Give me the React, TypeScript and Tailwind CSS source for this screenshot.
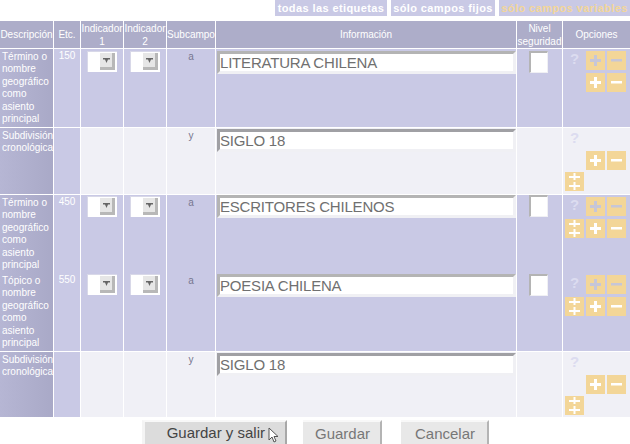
const FONT = "font-['Liberation_Sans',Arial,sans-serif]";

type Row = {
  desc: string;
  tag?: string;
  sub: string;
  value: string;
  height: string;
  inputTop: string;
  selectTop: string;
  light?: boolean;
  noRule?: boolean;
  opts: "first" | "full" | "lower";
};

const ROWS: Row[] = [
  { desc: "Término o nombre geográfico como asiento principal", tag: "150", sub: "a", value: "LITERATURA CHILENA", height: "h-[79px]", inputTop: "mt-[2px]", selectTop: "mt-[2px]", opts: "first" },
  { desc: "Subdivisión cronológica", sub: "y", value: "SIGLO 18", height: "h-[67px]", inputTop: "mt-[1px]", selectTop: "mt-[1px]", light: true, opts: "lower" },
  { desc: "Término o nombre geográfico como asiento principal", tag: "450", sub: "a", value: "ESCRITORES CHILENOS", height: "h-[78px]", inputTop: "mt-0", selectTop: "mt-[1px]", noRule: true, opts: "full" },
  { desc: "Tópico o nombre geográfico como asiento principal", tag: "550", sub: "a", value: "POESIA CHILENA", height: "h-[79px]", inputTop: "mt-[1px]", selectTop: "mt-[1px]", opts: "full" },
  { desc: "Subdivisión cronológica", sub: "y", value: "SIGLO 18", height: "h-[65px]", inputTop: "mt-[1px]", selectTop: "mt-[1px]", light: true, noRule: true, opts: "lower" },
];

function FakeSelect({ top }: { top: string }) {
  return (
    <div className={`mx-auto ${top} flex h-[21px] w-[30px] border-t border-l border-[#d8d8e8] bg-white pr-[2px] pb-[2px]`}>
      <div className="flex-1 bg-white" />
      <div className="flex h-[17px] w-[15px] items-center justify-center self-end border-r-[3px] border-b-[3px] border-[#b8b8b8] bg-[#e6e6e6]">
        <svg width="7" height="5" viewBox="0 0 7 5">
          <path d="M0 0h7v1.5H5L3.5 5 2 1.5H0z" fill="#666" />
        </svg>
      </div>
    </div>
  );
}

function OptionButton({ glyph, faded }: { glyph: "+" | "-" | "++"; faded?: boolean }) {
  const color = faded ? "#c6c6d8" : "#ffffff";
  return (
    <div className="flex h-[19px] w-[19px] items-center justify-center bg-[#f3d698]">
      <svg width="13" height="17" viewBox="0 0 13 17">
        {glyph === "+" && <path d="M5 3h3v4h4v3H8v4H5v-4H1V7h4z" fill={color} />}
        {glyph === "-" && <rect x="1" y="7" width="11" height="2.5" fill={color} />}
        {glyph === "++" && (
          <path d="M5.500 0h2v3h4.500v2H7.500v2h-2V5H1V3h4.500zM5.500 9h2v3h4.500v2H7.500v3h-2v-3H1v-2h4.500z" fill={color} />
        )}
      </svg>
    </div>
  );
}

function Help() {
  return (
    <div className="flex h-[19px] w-[19px] justify-center text-[15px] leading-[15px] font-bold text-[#dcdcf0]">
      ?
    </div>
  );
}

function Options({ kind }: { kind: Row["opts"] }) {
  if (kind === "lower") {
    return (
      <div className="grid grid-cols-[19px_19px_19px] gap-[2px] pt-[2px] pl-[2px]">
        <Help />
        <div className="col-span-2 h-[19px]" />
        <div />
        <OptionButton glyph="+" />
        <OptionButton glyph="-" />
        <OptionButton glyph="++" />
      </div>
    );
  }
  return (
    <div className="grid grid-cols-[19px_19px_19px] gap-x-[2px] gap-y-[3px] pt-[2px] pl-[2px]">
      <Help />
      <OptionButton glyph="+" faded />
      <OptionButton glyph="-" faded />
      {kind === "full" ? <OptionButton glyph="++" /> : <div />}
      <OptionButton glyph="+" />
      <OptionButton glyph="-" />
    </div>
  );
}

function RowCells({ row }: { row: Row }) {
  const rule = row.noRule ? "" : "border-b";
  const bg = row.light ? "bg-[#f0f0f6]" : "bg-[#c9c9e5]";
  const cell = `border-r border-white align-top ${rule} ${bg}`;
  const inset = row.light ? "border-t-[#a0a0a4] border-l-[#a0a0a4]" : "border-t-[#b4b4b4] border-l-[#b4b4b4]";
  return (
    <tr className={row.height}>
      <td className={`border-r border-white bg-gradient-to-r from-[#b6b6d4] to-[#a9a9c7] pt-[2px] pl-[2px] align-top text-[10px] leading-[12.4px] text-white ${rule}`}>
        {row.desc}
      </td>
      <td className={`border-r border-white bg-[#c9c9e5] pt-[1px] text-center align-top text-[10px] leading-[12px] text-white ${rule}`}>
        {row.tag}
      </td>
      <td className={cell}>{row.tag && <FakeSelect top={row.selectTop} />}</td>
      <td className={cell}>{row.tag && <FakeSelect top={row.selectTop} />}</td>
      <td className={`${cell} pt-[2px] text-center text-[10px] leading-[12px] text-[#77778f]`}>{row.sub}</td>
      <td className={cell}>
        <div className={`${row.inputTop} ml-[1px] flex h-[23px] items-center border-t-[3px] border-r-[3px] border-b-[3px] border-l-[3px] border-r-[#f0f0f4] border-b-[#f0f0f4] ${inset} bg-white pb-[1px] text-[15px] leading-none tracking-[-0.2px] text-[#707070]`}>
          {row.value}
        </div>
      </td>
      <td className={cell}>
        {row.tag && (
          <div className={`${row.inputTop} ml-[12px] h-[22px] w-[19px] border-t-[2px] border-r border-b border-l-[2px] border-t-[#b4b4b4] border-r-[#f0f0f4] border-b-[#f0f0f4] border-l-[#b4b4b4] bg-white`} />
        )}
      </td>
      <td className={`${bg} align-top ${rule} border-white`}>
        <Options kind={row.opts} />
      </td>
    </tr>
  );
}

function ActionButton({ label, width }: { label: string; width: string }) {
  return (
    <button
      type="button"
      className={`h-[24px] ${width} border-t-2 border-r-2 border-t-[#f8f8f8] border-r-[#b4b4b4] bg-[#e8e8e8] pt-[1px] pl-[2px] text-[15px] leading-[20px] text-[#777]`}
    >
      {label}
    </button>
  );
}

export default function App() {
  return (
    <div className={`flex h-[444px] w-[630px] flex-col overflow-hidden bg-white ${FONT}`}>
      <div className="flex h-[16px] justify-end gap-[4px] text-[11px] leading-[16px] font-bold tracking-[0.4px]">
        <span className="w-[112px] bg-[#c9c9e5] text-center text-white">todas las etiquetas</span>
        <span className="w-[104px] bg-[#c9c9e5] text-center text-white">sólo campos fijos</span>
        <span className="w-[131px] bg-[#c9c9e5] text-center text-[#f3d698]">sólo campos variables</span>
      </div>
      <table className="mt-[5px] w-[630px] table-fixed border-separate border-spacing-0">
        <colgroup>
          <col className="w-[54px]" />
          <col className="w-[27px]" />
          <col className="w-[43px]" />
          <col className="w-[43px]" />
          <col className="w-[49px]" />
          <col className="w-[301px]" />
          <col className="w-[46px]" />
          <col className="w-[67px]" />
        </colgroup>
        <thead>
          <tr className="h-[28px] text-center text-[10px] leading-[13px] font-normal text-white">
            {["Descripción", "Etc.", "Indicador 1", "Indicador 2", "Subcampo", "Información", "Nivel seguridad"].map((h) => (
              <th key={h} className="overflow-hidden border-r border-b border-white bg-[#adadc9] font-normal">
                {h}
              </th>
            ))}
            <th className="border-b border-white bg-[#adadc9] font-normal">Opciones</th>
          </tr>
        </thead>
        <tbody>
          {ROWS.map((row, i) => (
            <RowCells key={i} row={row} />
          ))}
        </tbody>
      </table>
      <div className="mt-[3px] flex">
        <div className="ml-[142px] flex gap-[16px]">
          <div className="relative">
            <button
              type="button"
              className="h-[24px] w-[145px] border-t-2 border-r-2 border-l-[3px] border-t-[#f8f8f8] border-r-[#a8a8a8] border-l-[#f4f4f4] bg-[#dcdcdc] pr-[8px] text-right text-[15px] leading-[20px] text-[#444]"
            >
              Guardar y salir<span className="inline-block w-[12px]" />
            </button>
            <svg className="absolute top-[7px] left-[126px]" width="10" height="16" viewBox="0 0 10 16">
              <path d="M1 1v12l3-3 2 5 2-1-2-4.500h4z" fill="#fff" stroke="#555" strokeWidth="1" />
            </svg>
          </div>
          <ActionButton label="Guardar" width="w-[79px]" />
          <div className="ml-[3px]">
            <ActionButton label="Cancelar" width="w-[88px]" />
          </div>
        </div>
      </div>
    </div>
  );
}
